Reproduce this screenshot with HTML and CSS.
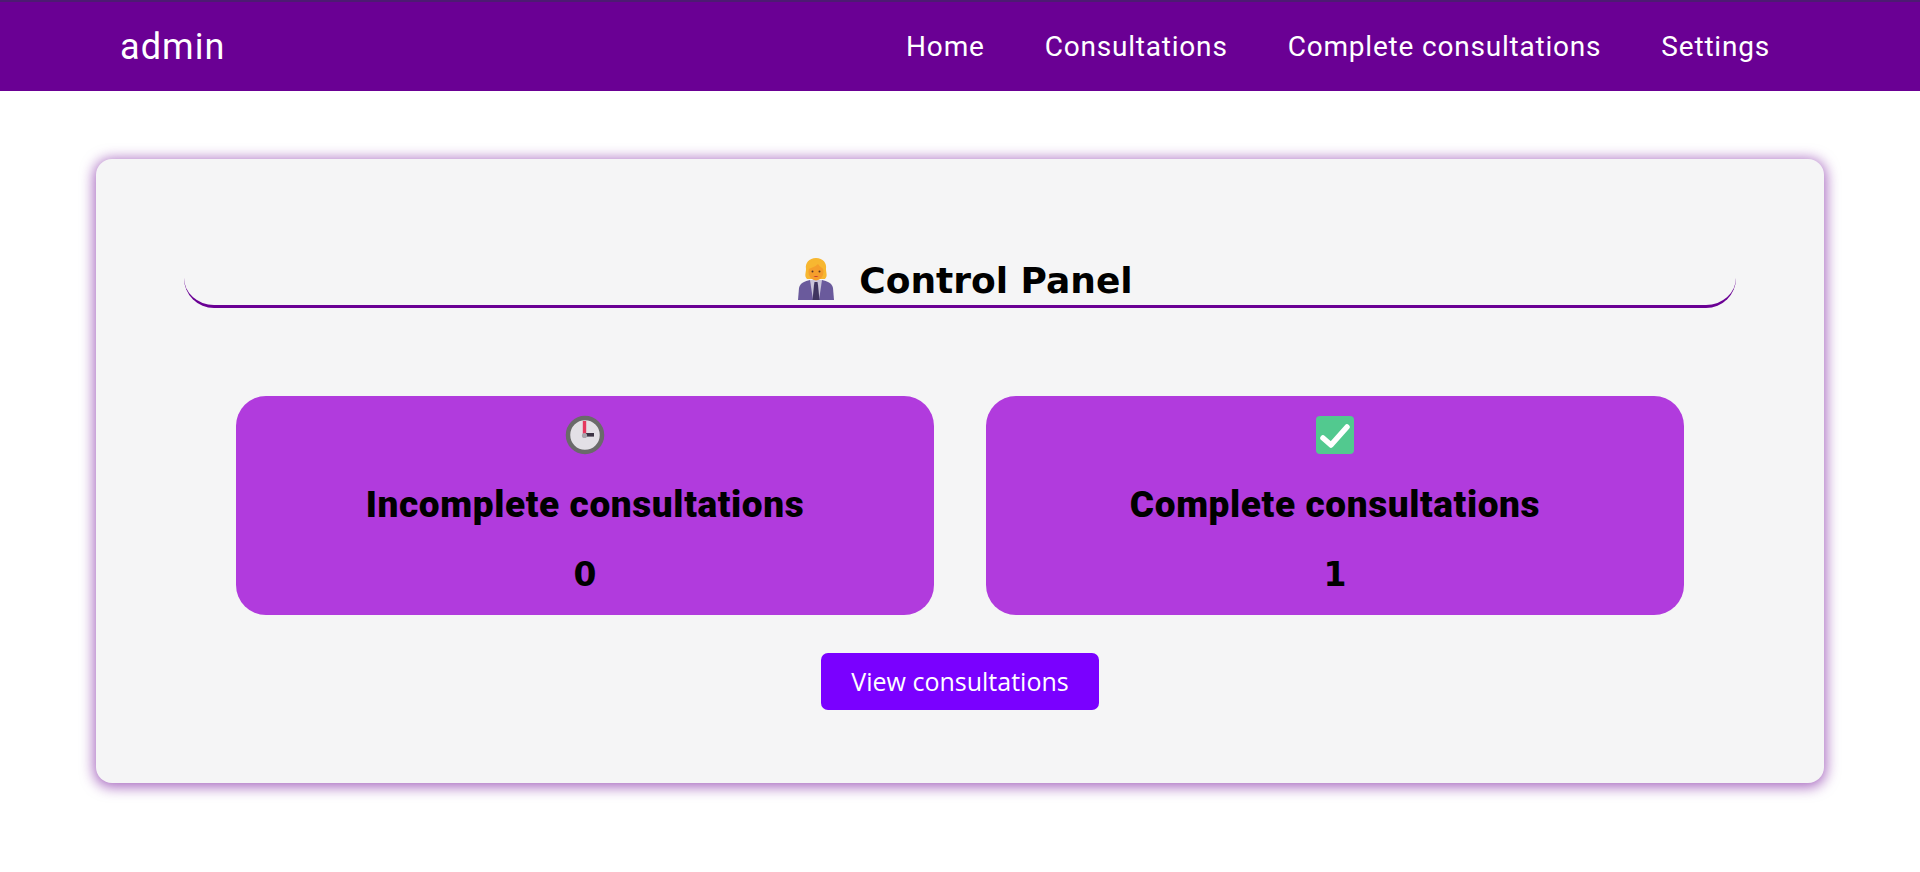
FILE: index.html
```html
<!DOCTYPE html>
<html lang="en">
<head>
    <meta charset="UTF-8">
    <meta name="viewport" content="width=device-width, initial-scale=1.0">
    <title>Control Panel</title>
    <link rel="stylesheet" href="styles.css">
</head>
<body>
    <header class="navbar">
        <div class="brand">admin</div>
        <nav class="nav-links">
            <a href="#">Home</a>
            <a href="#">Consultations</a>
            <a href="#">Complete consultations</a>
            <a href="#">Settings</a>
        </nav>
    </header>

    <main class="panel">
        <h2 class="panel-title">
            <svg class="emoji-worker" viewBox="0 0 36 42" width="36" height="42">
                <path d="M0 42 L1 30 C2 25 7 23 12 22 L24 22 C29 23 34 25 35 30 L36 42 Z" fill="#6a5a9c"/>
                <path d="M12 22 L24 22 L21 42 L15 42 Z" fill="#c9c4da"/>
                <path d="M16.5 24 L19.5 24 L20 27 L21.5 42 L14.5 42 L16 27 Z" fill="#3f3560"/>
                <path d="M18 0 C11 0 7 5 8 11 C8 15 6 18 9 21 L27 21 C30 18 28 15 28 11 C29 5 25 0 18 0 Z" fill="#f7b731"/>
                <ellipse cx="18" cy="14" rx="7.5" ry="8.5" fill="#f59e2c"/>
                <path d="M10 11 C13 10 17 9 20 6 C22 9 24 10 26 11 C26 5 23 2 18 2 C13 2 10 5 10 11 Z" fill="#f7b731"/>
                <circle cx="14.5" cy="13.5" r="1" fill="#5a3825"/>
                <circle cx="21.5" cy="13.5" r="1" fill="#5a3825"/>
                <path d="M15.5 18 Q18 20 20.5 18 Z" fill="#c8352f"/>
            </svg>
            <span>Control Panel</span>
        </h2>

        <div class="stats">
            <section class="stat-card">
                <svg class="emoji" viewBox="0 0 40 40" width="40" height="40">
                    <circle cx="20" cy="20" r="17" fill="#e3e0e6" stroke="#6a6a6a" stroke-width="4.5"/>
                    <rect x="17.8" y="6" width="3.4" height="13" fill="#e5395f"/>
                    <rect x="21" y="18" width="8" height="3.6" fill="#3b3344"/>
                    <circle cx="19.5" cy="20.5" r="2.6" fill="#a8a4ac"/>
                </svg>
                <h3>Incomplete consultations</h3>
                <p class="stat-value">0</p>
            </section>
            <section class="stat-card">
                <svg class="emoji" viewBox="0 0 40 40" width="40" height="40">
                    <rect x="1" y="1" width="38" height="38" rx="4" fill="#52c98f"/>
                    <path d="M8 23 L16 30 L32 12" fill="none" stroke="#fff" stroke-width="5.5" stroke-linecap="round" stroke-linejoin="round"/>
                </svg>
                <h3>Complete consultations</h3>
                <p class="stat-value">1</p>
            </section>
        </div>

        <div class="actions">
            <a class="btn" href="#">View consultations</a>
        </div>
    </main>
</body>
</html>
```

FILE: styles.css
```css
* { box-sizing: border-box; }
body { margin: 0; min-height: 100vh; background: #fff; font-family: Roboto, sans-serif; color: #000; }

.navbar { display: flex; justify-content: space-between; align-items: center; height: 91px; padding: 0 150px 0 120px; background: #6a0094; border-top: 2px solid #4d1a72; }
.brand { color: #fff; font-size: 36px; letter-spacing: 1.1px; }
.nav-links { display: flex; gap: 60px; }
.nav-links a { color: #fff; text-decoration: none; font-size: 28px; letter-spacing: 0.8px; }

.panel { width: 90%; margin: 68px auto 0; padding: 87px 88px 73px; background: #f5f5f6; border-radius: 16px; box-shadow: 0 2px 14px 2px rgba(106, 0, 148, 0.6); }
.panel-title { display: flex; justify-content: center; align-items: flex-end; gap: 25px; height: 62px; margin: 0 0 88px; padding: 0 0 1px 11px; border-bottom: 3px solid #6a0094; border-radius: 30px; font-family: "DejaVu Sans", sans-serif; font-size: 36px; font-weight: 700; line-height: 46px; }
.emoji-worker { margin-bottom: 4px; }

.stats { display: grid; grid-template-columns: 1fr 1fr; gap: 52px; padding: 0 52px; }
.stat-card { height: 219px; padding-top: 19px; background: #b13bdd; border-radius: 30px; text-align: center; }
.emoji { display: block; margin: 0 auto; }
.stat-card h3 { margin: 30px 0 0; font-size: 37px; font-weight: 900; line-height: 40px; letter-spacing: 0.6px; }
.stat-value { margin: 30px 0 0; font-family: "DejaVu Sans", sans-serif; font-size: 33px; font-weight: 700; line-height: 40px; }

.actions { display: flex; justify-content: center; margin-top: 38px; }
.btn { display: block; padding: 12px 30px; background: #7a00ff; border-radius: 7px; color: #fff; text-decoration: none; font-family: "Open Sans", sans-serif; font-size: 25px; line-height: 33px; }
```
